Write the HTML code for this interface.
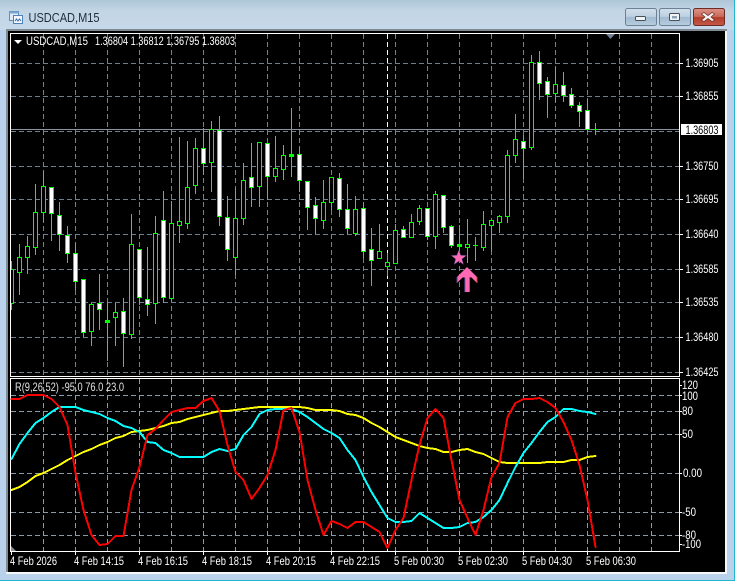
<!DOCTYPE html>
<html>
<head>
<meta charset="utf-8">
<title>USDCAD,M15</title>
<style>
html,body{margin:0;padding:0;background:#fff;width:737px;height:582px;overflow:hidden}
svg{display:block;position:absolute;left:0;top:0}
text{font-family:"Liberation Sans",sans-serif;font-size:12px;fill:#fff}
</style>
</head>
<body>
<svg width="737" height="582" viewBox="0 0 737 582" xmlns="http://www.w3.org/2000/svg">
<defs>
<linearGradient id="tb" x1="0" y1="0" x2="0" y2="1"><stop offset="0" stop-color="#aec6d8"/><stop offset=".35" stop-color="#c2d5e4"/><stop offset="1" stop-color="#c6d9ea"/></linearGradient>
<linearGradient id="btn" x1="0" y1="0" x2="0" y2="1"><stop offset="0" stop-color="#d3e0ec"/><stop offset=".48" stop-color="#bccfe0"/><stop offset=".52" stop-color="#a2bad0"/><stop offset="1" stop-color="#b8cee0"/></linearGradient>
<linearGradient id="cls" x1="0" y1="0" x2="0" y2="1"><stop offset="0" stop-color="#dc9488"/><stop offset=".48" stop-color="#c9695a"/><stop offset=".52" stop-color="#b43c2a"/><stop offset="1" stop-color="#c45a48"/></linearGradient>
<clipPath id="up"><rect x="11" y="34" width="668" height="342"/></clipPath>
</defs>

<!-- window frame -->
<rect x="0" y="0" width="734" height="580" fill="#b9d1ea"/>
<rect x="0" y="0" width="734" height="30" fill="url(#tb)"/>
<rect x="734" y="0" width="1" height="581" fill="#1fb7cf"/>
<rect x="0" y="580" width="735" height="1" fill="#1fb7cf"/>
<rect x="6" y="29" width="721" height="2" fill="#7f8a92"/>
<rect x="6" y="29" width="2" height="545" fill="#7f8a92"/>
<rect x="8" y="31" width="717" height="541" fill="#000"/>
<rect x="725" y="31" width="2" height="543" fill="#f4f7fa"/>
<rect x="6" y="572" width="721" height="2" fill="#f4f7fa"/>

<!-- title -->
<g shape-rendering="crispEdges">
<rect x="9.500" y="11.500" width="9" height="9" fill="#dfeaf5" stroke="#5f8fc0"/>
<rect x="9.500" y="11.500" width="9" height="2" fill="#7aa5d0"/>
<rect x="13.500" y="15.500" width="9" height="8" fill="#f2f6fb" stroke="#4f82b8"/>
</g>
<path d="M15 21l1.500-2 1.500 2 1.500-2 1.500 2" fill="none" stroke="#3c6fa8" stroke-width="1"/>
<text x="28.500" y="22" textLength="71" lengthAdjust="spacingAndGlyphs" style="font-size:12.500px;fill:#1c2f40">USDCAD,M15</text>

<!-- buttons -->
<rect x="625.500" y="8.500" width="31" height="17" rx="2" fill="url(#btn)" stroke="#6d8196"/>
<rect x="635.500" y="16.500" width="10" height="4" rx="1" fill="#f2f4f6" stroke="#45525e"/>
<rect x="659.500" y="8.500" width="31" height="17" rx="2" fill="url(#btn)" stroke="#6d8196"/>
<rect x="669.500" y="13.500" width="10" height="7" rx="1" fill="#f2f4f6" stroke="#45525e"/>
<rect x="672" y="16" width="5" height="2.500" fill="#8da3b8"/>
<rect x="693.500" y="8.500" width="31" height="17" rx="2" fill="url(#cls)" stroke="#6e2a24"/>
<path d="M704 12.500l4 3 4-3 2.500 1.500-3.500 3 3.500 3-2.500 1.500-4-3-4 3-2.500-1.500 3.500-3-3.500-3z" fill="#f4f2f0" stroke="#6a2a22" stroke-width=".7"/>

<!-- upper pane grid -->
<g shape-rendering="crispEdges" stroke="#708090" stroke-width="1" stroke-dasharray="5 3" fill="none">
<path d="M11 63.500H679M11 96.500H679M11 131.500H679M11 166.500H679M11 199.500H679M11 234.500H679M11 269.500H679M11 302.500H679M11 337.500H679M11 372.500H679"/>
<path d="M43.500 34V376M75.500 34V376M107.500 34V376M139.500 34V376M171.500 34V376M203.500 34V376M235.500 34V376M267.500 34V376M299.500 34V376M331.500 34V376M363.500 34V376M395.500 34V376M427.500 34V376M459.500 34V376M491.500 34V376M523.500 34V376M555.500 34V376M587.500 34V376M619.500 34V376M651.500 34V376"/>
<path d="M43.500 379V551M75.500 379V551M107.500 379V551M139.500 379V551M171.500 379V551M203.500 379V551M235.500 379V551M267.500 379V551M299.500 379V551M331.500 379V551M363.500 379V551M395.500 379V551M427.500 379V551M459.500 379V551M491.500 379V551M523.500 379V551M555.500 379V551M587.500 379V551M619.500 379V551M651.500 379V551" stroke="#8a99a8"/>
<path d="M11 395.500H679M11 411.500H679M11 434.500H679M11 473.500H679M11 512.500H679M11 535.500H679" stroke="#8a99a8"/>
<path d="M387.500 34V376M387.500 379V551" stroke="#fff"/>
</g>
<rect x="11" y="129" width="668" height="1" fill="#8b949e" shape-rendering="crispEdges"/>

<!-- candles -->
<g clip-path="url(#up)" shape-rendering="crispEdges">
<path fill="none" stroke="#00ff00" stroke-width="1" d="M11.500 261V310M19.500 244V295M27.500 236V274M35.500 184V255M43.500 171V222M51.500 187V241M59.500 202V251M67.500 226V263M75.500 243V290M83.500 279V337M91.500 303V346M99.500 274V330M107.500 302V361M115.500 303V346M123.500 298V367M131.500 214V339M139.500 249V305M147.500 247V316M155.500 216V324M163.500 191V303M171.500 201V301M179.500 137V243M187.500 141V229M195.500 138V194M203.500 128V175M211.500 121V192M219.500 116V226M227.500 196V261M235.500 188V275M243.500 163V225M251.500 143V207M259.500 142V207M267.500 143V200M275.500 136V182M283.500 145V180M291.500 108V177M299.500 147V192M307.500 181V230M315.500 197V234M323.500 180V229M331.500 177V210M339.500 173V217M347.500 184V234M355.500 196V236M363.500 202V258M371.500 228V286M379.500 224V258M387.500 253V276M395.500 224V263M403.500 226V237M411.500 214V237M419.500 205V225M427.500 208V240M435.500 191V249M443.500 195V233M451.500 225V248M459.500 225V252M467.500 219V263M475.500 237V261M483.500 211V251M491.500 220V252M499.500 215V233M507.500 150V223M515.500 114V163M523.500 135V179M531.500 55V150M539.500 51V100M547.500 77V118M555.500 67V102M563.500 72V102M571.500 88V108M579.500 102V127M587.500 99V132M595.500 123V135"/>
<path fill="#00ff00" d="M9 269h5V304h-5zM17 257h5V273h-5zM25 246h5V258h-5zM33 212h5V248h-5zM41 186h5V213h-5zM49 187h5V214h-5zM57 215h5V235h-5zM65 235h5V254h-5zM73 253h5V282h-5zM81 279h5V333h-5zM89 304h5V332h-5zM97 303h5V310h-5zM105 320h5V323h-5zM113 312h5V318h-5zM121 311h5V334h-5zM129 244h5V335h-5zM137 249h5V298h-5zM145 299h5V305h-5zM153 233h5V304h-5zM161 220h5V298h-5zM169 223h5V299h-5zM177 221h5V226h-5zM185 187h5V224h-5zM193 148h5V186h-5zM201 148h5V164h-5zM209 129h5V163h-5zM217 130h5V217h-5zM225 217h5V250h-5zM233 218h5V258h-5zM241 180h5V219h-5zM249 177h5V188h-5zM257 142h5V187h-5zM265 143h5V177h-5zM273 168h5V177h-5zM281 155h5V170h-5zM289 154h5V157h-5zM297 154h5V181h-5zM305 181h5V208h-5zM313 205h5V219h-5zM321 202h5V221h-5zM329 177h5V203h-5zM337 178h5V210h-5zM345 209h5V229h-5zM353 209h5V234h-5zM361 208h5V252h-5zM369 249h5V261h-5zM377 251h5V259h-5zM385 262h5V267h-5zM393 230h5V264h-5zM401 229h5V238h-5zM409 222h5V238h-5zM417 208h5V222h-5zM425 208h5V237h-5zM433 194h5V237h-5zM441 195h5V228h-5zM449 226h5V246h-5zM457 244h5V247h-5zM465 244h5V248h-5zM473 245h5V246h-5zM481 224h5V248h-5zM489 220h5V226h-5zM497 216h5V223h-5zM505 155h5V217h-5zM513 139h5V156h-5zM521 141h5V149h-5zM529 62h5V148h-5zM537 62h5V84h-5zM545 81h5V95h-5zM553 84h5V94h-5zM561 85h5V96h-5zM569 94h5V106h-5zM577 105h5V112h-5zM585 110h5V130h-5zM593 129h5V130h-5z"/>
<path fill="#000" d="M10 270h3V303h-3zM18 258h3V272h-3zM26 247h3V257h-3zM34 213h3V247h-3zM42 187h3V212h-3zM90 305h3V331h-3zM114 313h3V317h-3zM130 245h3V334h-3zM154 234h3V303h-3zM170 224h3V298h-3zM178 222h3V225h-3zM186 188h3V223h-3zM194 149h3V185h-3zM210 130h3V162h-3zM234 219h3V257h-3zM242 181h3V218h-3zM258 143h3V186h-3zM274 169h3V176h-3zM282 156h3V169h-3zM322 203h3V220h-3zM330 178h3V202h-3zM354 210h3V233h-3zM378 252h3V258h-3zM386 263h3V266h-3zM394 231h3V263h-3zM410 223h3V237h-3zM418 209h3V221h-3zM434 195h3V236h-3zM466 245h3V247h-3zM482 225h3V247h-3zM490 221h3V225h-3zM498 217h3V222h-3zM506 156h3V216h-3zM514 140h3V155h-3zM530 63h3V147h-3zM554 85h3V93h-3z"/>
<path fill="#fff" d="M50 188h3V213h-3zM58 216h3V234h-3zM66 236h3V253h-3zM74 254h3V281h-3zM82 280h3V332h-3zM98 304h3V309h-3zM122 312h3V333h-3zM138 250h3V297h-3zM146 300h3V304h-3zM162 221h3V297h-3zM202 149h3V163h-3zM218 131h3V216h-3zM226 218h3V249h-3zM250 178h3V187h-3zM266 144h3V176h-3zM298 155h3V180h-3zM306 182h3V207h-3zM314 206h3V218h-3zM338 179h3V209h-3zM346 210h3V228h-3zM362 209h3V251h-3zM370 250h3V260h-3zM402 230h3V237h-3zM426 209h3V236h-3zM442 196h3V227h-3zM450 227h3V245h-3zM522 142h3V148h-3zM538 63h3V83h-3zM546 82h3V94h-3zM562 86h3V95h-3zM570 95h3V105h-3zM578 106h3V111h-3zM586 111h3V129h-3z"/>
</g>

<!-- star + arrow -->
<path d="M458.800 250l2 5.300 5.700.2-4.500 3.500 1.600 5.500-4.800-3.200-4.800 3.200 1.600-5.500-4.500-3.500 5.700-.2z" fill="#ff69b4" stroke="#3a3a80" stroke-width=".5"/>
<path d="M467 267l10 10v6l-5.500-5.500h-2.300V292h-4.400V277.500h-2.300L457 283v-6z" fill="#ff69b4"/>
<path d="M464.800 292V278M457 283v-6" stroke="#54408c" stroke-width="1" fill="none"/>
<path d="M469.500 292V278M477 283v-6" stroke="#d8402a" stroke-width="1" fill="none"/>

<!-- panel frames -->
<g shape-rendering="crispEdges" fill="none" stroke="#fff" stroke-width="1">
<rect x="10.500" y="33.500" width="669" height="343"/>
<rect x="10.500" y="378.500" width="669" height="173"/>
<path d="M680 63.500h3M680 96.500h3M680 166.500h3M680 199.500h3M680 234.500h3M680 269.500h3M680 302.500h3M680 337.500h3M680 372.500h3"/>
<path d="M680 395.500h2M680 411.500h2M680 434.500h2M680 473.500h2M680 512.500h2M680 535.500h2M680 544.500h2M680 385.500h2"/>
<path d="M11.500 552v3M75.500 552v3M139.500 552v3M203.500 552v3M267.500 552v3M331.500 552v3M395.500 552v3M459.500 552v3M523.500 552v3M587.500 552v3"/>
</g>
<path d="M11 546l5 5h-5z" fill="#8a8f94"/>
<path d="M606 34h9l-4.500 5z" fill="#708090"/>
<path d="M14 40h8l-4 4z" fill="#fff"/>

<!-- indicator lines -->
<g fill="none" stroke-width="2" stroke-linejoin="round" stroke-linecap="round" shape-rendering="crispEdges">
<polyline stroke="#ffff00" points="11.500,490 19.500,487 27.500,482 35.500,476 43.500,473 51.500,469 59.500,465 67.500,460 75.500,456 83.500,452 91.500,449 99.500,445 107.500,442 115.500,438 123.500,436 131.500,432 139.500,431 147.500,430 155.500,428 163.500,426 171.500,423 179.500,422 187.500,419 195.500,417 203.500,415 211.500,413 219.500,411 227.500,411 235.500,410 243.500,409 251.500,408 259.500,407 267.500,407 275.500,407 283.500,407 291.500,407 299.500,407 307.500,408 315.500,410 323.500,410 331.500,410 339.500,411 347.500,414 355.500,415 363.500,418 371.500,423 379.500,427 387.500,432 395.500,437 403.500,440 411.500,443 419.500,446 427.500,448 435.500,449 443.500,452 451.500,452 459.500,450 467.500,449 475.500,452 483.500,454 491.500,458 499.500,462 507.500,463 515.500,463 523.500,463 531.500,463 539.500,463 547.500,462 555.500,462 563.500,462 571.500,460 579.500,460 587.500,457 595.500,456"/>
<polyline stroke="#00ffff" points="11.500,459 19.500,444 27.500,433 35.500,423 43.500,418 51.500,412 59.500,407 67.500,407 75.500,407 83.500,410 91.500,412 99.500,414 107.500,418 115.500,421 123.500,426 131.500,428 139.500,432 147.500,442 155.500,443 163.500,450 171.500,453 179.500,457 187.500,457 195.500,457 203.500,457 211.500,452 219.500,449 227.500,451 235.500,449 243.500,435 251.500,427 259.500,414 267.500,410 275.500,409 283.500,409 291.500,409 299.500,412 307.500,417 315.500,423 323.500,429 331.500,433 339.500,438 347.500,450 355.500,460 363.500,477 371.500,492 379.500,505 387.500,518 395.500,522 403.500,522 411.500,521 419.500,513 427.500,518 435.500,523 443.500,528 451.500,528 459.500,527 467.500,523 475.500,522 483.500,517 491.500,510 499.500,500 507.500,483 515.500,467 523.500,453 531.500,443 539.500,432 547.500,422 555.500,417 563.500,409 571.500,409 579.500,411 587.500,412 595.500,414"/>
<polyline stroke="#ff0000" points="11.500,399 19.500,399 27.500,395 35.500,395 43.500,395 51.500,399 59.500,407 67.500,425 75.500,473 83.500,510 91.500,535 99.500,545 107.500,544 115.500,536 123.500,536 131.500,490 139.500,467 147.500,435 155.500,429 163.500,420 171.500,412 179.500,410 187.500,408 195.500,408 203.500,401 211.500,398 219.500,411 227.500,445 235.500,472 243.500,480 251.500,499 259.500,488 267.500,475 275.500,450 283.500,410 291.500,408 299.500,432 307.500,480 315.500,510 323.500,535 331.500,521 339.500,524 347.500,528 355.500,522 363.500,522 371.500,527 379.500,532 387.500,548 395.500,530 403.500,518 411.500,480 419.500,445 427.500,418 435.500,409 443.500,418 451.500,460 459.500,500 467.500,518 475.500,535 483.500,510 491.500,477 499.500,463 507.500,417 515.500,403 523.500,399 531.500,399 539.500,398 547.500,402 555.500,408 563.500,422 571.500,440 579.500,465 587.500,500 595.500,547"/>
</g>

<!-- header text -->
<text x="26" y="45" textLength="62" lengthAdjust="spacingAndGlyphs">USDCAD,M15</text>
<text x="95" y="45" textLength="140" lengthAdjust="spacingAndGlyphs">1.36804 1.36812 1.36795 1.36803</text>
<text x="15" y="391" textLength="109" lengthAdjust="spacingAndGlyphs" style="fill:#e0e0e0">R(9,26,52) -95.0 76.0 23.0</text>

<!-- right axis -->
<g>
<text x="685.500" y="67" textLength="33" lengthAdjust="spacingAndGlyphs">1.36905</text>
<text x="685.500" y="100" textLength="33" lengthAdjust="spacingAndGlyphs">1.36855</text>
<rect x="681" y="124" width="41" height="11" fill="#fff" shape-rendering="crispEdges"/>
<text x="685.500" y="134" textLength="33" lengthAdjust="spacingAndGlyphs" style="fill:#000">1.36803</text>
<text x="685.500" y="170" textLength="33" lengthAdjust="spacingAndGlyphs">1.36750</text>
<text x="685.500" y="203" textLength="33" lengthAdjust="spacingAndGlyphs">1.36695</text>
<text x="685.500" y="238" textLength="33" lengthAdjust="spacingAndGlyphs">1.36640</text>
<text x="685.500" y="273" textLength="33" lengthAdjust="spacingAndGlyphs">1.36585</text>
<text x="685.500" y="306" textLength="33" lengthAdjust="spacingAndGlyphs">1.36535</text>
<text x="685.500" y="341" textLength="33" lengthAdjust="spacingAndGlyphs">1.36480</text>
<text x="685.500" y="376" textLength="33" lengthAdjust="spacingAndGlyphs">1.36425</text>
<text x="682" y="389" textLength="16" lengthAdjust="spacingAndGlyphs">120</text>
<text x="682" y="400" textLength="16" lengthAdjust="spacingAndGlyphs">100</text>
<text x="682" y="415" textLength="11" lengthAdjust="spacingAndGlyphs">80</text>
<text x="682" y="438" textLength="11" lengthAdjust="spacingAndGlyphs">50</text>
<text x="683" y="477" textLength="19" lengthAdjust="spacingAndGlyphs">0.00</text>
<text x="682" y="516" textLength="14" lengthAdjust="spacingAndGlyphs">-50</text>
<text x="682" y="539" textLength="14" lengthAdjust="spacingAndGlyphs">-80</text>
<text x="682" y="548" textLength="19" lengthAdjust="spacingAndGlyphs">-100</text>
</g>

<!-- time axis -->
<g>
<text x="10" y="565" textLength="47" lengthAdjust="spacingAndGlyphs">4 Feb 2026</text>
<text x="74" y="565" textLength="50" lengthAdjust="spacingAndGlyphs">4 Feb 14:15</text>
<text x="138" y="565" textLength="50" lengthAdjust="spacingAndGlyphs">4 Feb 16:15</text>
<text x="202" y="565" textLength="50" lengthAdjust="spacingAndGlyphs">4 Feb 18:15</text>
<text x="266" y="565" textLength="50" lengthAdjust="spacingAndGlyphs">4 Feb 20:15</text>
<text x="330" y="565" textLength="50" lengthAdjust="spacingAndGlyphs">4 Feb 22:15</text>
<text x="394" y="565" textLength="50" lengthAdjust="spacingAndGlyphs">5 Feb 00:30</text>
<text x="458" y="565" textLength="50" lengthAdjust="spacingAndGlyphs">5 Feb 02:30</text>
<text x="522" y="565" textLength="50" lengthAdjust="spacingAndGlyphs">5 Feb 04:30</text>
<text x="586" y="565" textLength="50" lengthAdjust="spacingAndGlyphs">5 Feb 06:30</text>
</g>
</svg>
</body>
</html>
